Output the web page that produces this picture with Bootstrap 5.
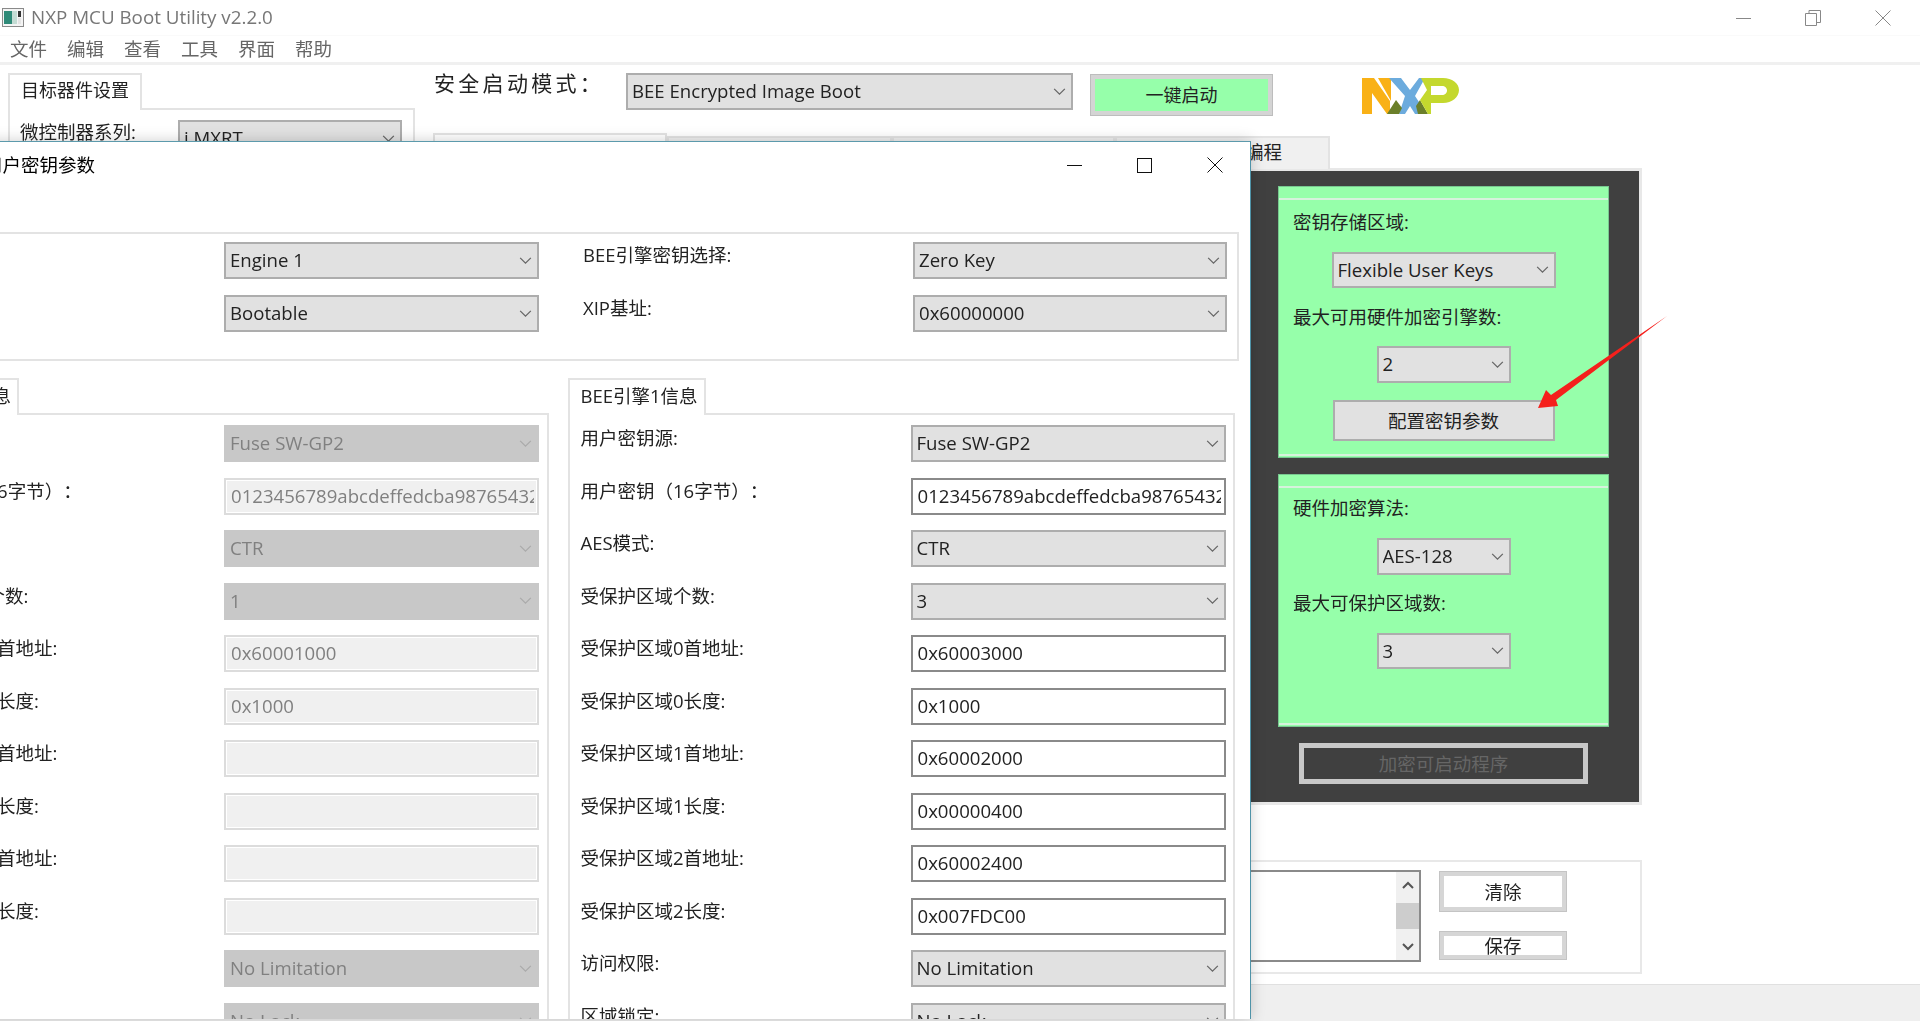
<!DOCTYPE html>
<html lang="zh">
<head>
<meta charset="utf-8">
<title>NXP MCU Boot Utility v2.2.0</title>
<link href="https://cdn.jsdelivr.net/npm/bootstrap@5.3.0/dist/css/bootstrap.min.css" rel="stylesheet">
<style>
html,body{margin:0;height:1021px;overflow:hidden;background:#fff}
body{font-family:"Open Sans","Noto Sans CJK SC",sans-serif;font-size:18.5px;color:#222;text-spacing-trim:space-all}
.wx-desk{position:relative;width:1920px;height:1021px;overflow:hidden;filter:blur(.4px)}
.wx-main{height:1019px}
.wx-tbar{height:36px;padding-left:2px;border-bottom:1px solid #fafafa}
.wx-title{font-size:18.8px;color:#777;margin-left:7px}
.wx-ctl{margin-left:auto;padding-right:29px;gap:54px}
.wx-menu{height:26px;padding-left:10px;gap:20px;font-size:18.5px;color:#666;line-height:26px}
.wx-sep{height:3px;background:#f0f0f0}
.wx-left{width:407px;margin-left:8px;margin-top:8px;flex:none}
.wx-tab{height:37px;border:2px solid #e3e3e3;border-bottom:0;background:#fff;padding:0 11px;font-size:18px;line-height:31px;white-space:nowrap;flex:none}
.wx-pane{border:2px solid #e3e3e3;padding:10px 10px}
.wx-center{width:1209px;margin-left:18px;flex:none}
.wx-top{margin-top:8px;height:43px}
.wx-mode{width:193px;font-size:21px;letter-spacing:3.3px;line-height:20px;white-space:nowrap;padding-left:1px}
.wx-sel.form-select{--bs-form-select-bg-img:url("data:image/svg+xml,%3csvg xmlns='http://www.w3.org/2000/svg' viewBox='0 0 14 9'%3e%3cpath fill='none' stroke='%23666' stroke-width='1.4' d='M1 1l6 6 6-6'/%3e%3c/svg%3e");height:37px;min-height:0;border:2px solid #adadad;border-radius:0;background-color:#e1e1e1;background-size:13px 8px;background-position:right 5px center;padding:0 20px 1px 4px;font-size:18.6px;line-height:32px;color:#222;box-shadow:none;font-family:inherit;flex:none}
.wx-sel.form-select:disabled{--bs-form-select-bg-img:url("data:image/svg+xml,%3csvg xmlns='http://www.w3.org/2000/svg' viewBox='0 0 14 9'%3e%3cpath fill='none' stroke='%23aaa' stroke-width='1.4' d='M1 1l6 6 6-6'/%3e%3c/svg%3e");background-color:#c8c8c8;border-color:#c8c8c8;color:#808080;opacity:1}
.wx-in.form-control{height:37px;min-height:0;border:2px solid #8a8a8a;border-radius:0;padding:0 3px 2px 5px;font-size:18.6px;line-height:31px;color:#222;background:#fff;box-shadow:none;font-family:inherit;flex:none}
.wx-in.form-control:disabled{border-color:#dcdcdc;background:#f0f0f0;color:#808080;box-shadow:inset 0 0 0 1px #fff;opacity:1}
.wx-w447{width:447px}.wx-w315{width:315px}.wx-w314{width:314px}.wx-w224{width:224px}.wx-w134{width:134px}
.wx-go{width:183px;height:42px;margin-left:17px;margin-top:1px;border:5px solid #d4d4d4;outline:1px solid #bdbdbd;outline-offset:-1px;background:#96ffaa;color:#222;font-size:18px;border-radius:0;padding:0;line-height:30px}
.wx-logo{margin-left:89px;margin-top:5px;flex:none}
.wx-tabs{margin-top:20px;height:33px}
.wx-t{background:#f0f0f0;border:2px solid #e3e3e3;border-bottom:0;font-size:18.5px;line-height:28px;text-align:right;flex:none}
.wx-t1{width:234px;background:#fff;margin-top:-3px}.wx-t2{width:225px}.wx-t3{width:223px}.wx-t4{width:215px;padding-right:46px}
.wx-board{height:637px;margin-top:-1px;border:3px solid #e8e8e8;background:#404040;padding:15px 30px 0 0}
.wx-stack{width:331px}
.wx-green{width:331px;background:#96ffaa;border:1px solid #78c890;padding-top:11px}
.wx-g1{height:272px}.wx-g2{height:253px;margin-top:16px}
.wx-ginner{border-top:2px solid #d6f2dc;border-bottom:2px solid #d6f2dc;flex:1;padding-left:14px;margin-bottom:1px}
.wx-lbl{font-size:18.5px;line-height:24px;color:#222;white-space:nowrap}
.wx-m10{margin-top:10px}.wx-m8{margin-top:8px}.wx-m18{margin-top:18px}.wx-m17{margin-top:17px}.wx-m16{margin-top:16px}
.wx-centerx{align-self:center;margin-left:-14px}
.wx-h36.form-select{height:36px}
.wx-cfg{width:222px;height:41px;border:2px solid #adadad;background:#e1e1e1;color:#222;font-size:18.5px;border-radius:0;padding:0}
.wx-enc{width:289px;height:41px;margin-top:16px;border:5px solid #c8c8c8;background:#404040;color:#666;font-size:18.5px;border-radius:0;padding:0}
.wx-enc:disabled{background:#404040;color:#666;border-color:#c8c8c8;opacity:1}
.wx-log{height:114px;margin-top:55px;border:2px solid #e8e8e8;padding:8px 73px 0 0;gap:18px}
.wx-text{width:600px;height:92px;border:2px solid #8a8a8a;background:#fff;flex:none}
.wx-scroll{width:23px;background:#f0f0f0;margin-left:auto;padding:9px 0}
.wx-thumb{width:23px;height:26px;background:#cdcdcd}
.wx-side{width:128px;gap:19px;padding-top:1px}
.wx-wbtn{width:128px;border:5px solid #d6d6d6;outline:1px solid #c4c4c4;outline-offset:-1px;background:#fff;color:#222;font-size:18.5px;border-radius:0;padding:0;line-height:20px}
.wx-h41{height:41px}.wx-h29{height:29px}
.wx-status{height:37px;background:#efefef;border-top:1px solid #e0e0e0}
.wx-strip{height:2px}
.wx-s1{width:71px;background:#111}.wx-s2{width:516px;background:#aaa}.wx-s3{flex:1;background:#111}
.wx-dialog{position:absolute;left:-131px;top:141px;width:1382px;height:878px;background:#fff;border-top:1px solid #5c9aac;border-right:1px solid #4f93a8;box-shadow:0 0 14px rgba(0,0,0,.2);overflow:hidden;padding-left:12px;padding-right:11px}
.wx-dhead{height:46px;font-size:18.5px;color:#000;padding-left:103px}
.wx-dctl{margin-left:auto;padding-right:16px;gap:55px}
.wx-group{margin-top:44px;height:129px;border:2px solid #e3e3e3;padding:8px 0 0 341px;gap:16px}
.wx-glabel{width:330px;margin-left:44px;line-height:26px;font-size:18.5px;color:#222;white-space:nowrap;flex:none}
.wx-panels{margin-top:17px;gap:19px;display:grid;grid-template-columns:667.5px 667.5px}
.wx-dtab{width:138px}
.wx-dbody{border:2px solid #e3e3e3;border-bottom:0;margin-top:-2px;padding:10px 0 0 11px;gap:15.5px}
.wx-dtabtext{font-size:18.5px;line-height:32px}
.wx-field{height:37px}
.wx-flabel{width:330px;line-height:26px;font-size:18.5px;color:#222;white-space:nowrap;flex:none}
.wx-arrow{position:absolute;left:1530px;top:310px}
</style>
</head>
<body>
<div class="wx-desk">
  <div class="wx-main d-flex flex-column">
    <div class="wx-tbar d-flex align-items-center">
      <svg width="22" height="19" viewBox="0 0 22 19"><rect x=".5" y=".5" width="21" height="18" fill="#f4f4f4" stroke="#8a8a8a"/><rect x="2" y="3" width="8" height="13" fill="#2f8a78"/><rect x="10" y="3" width="5" height="13" fill="#c4dcd4"/><rect x="16" y="3" width="3" height="6" fill="#333"/><rect x="16" y="10" width="3" height="6" fill="#e4e4e4"/></svg>
      <span class="wx-title">NXP MCU Boot Utility v2.2.0</span>
      <div class="wx-ctl d-flex align-items-center">
        <svg width="15" height="16" viewBox="0 0 15 16"><path d="M0 8.500h15" stroke="#888" fill="none"/></svg>
        <svg width="16" height="16" viewBox="0 0 16 16"><path d="M.5 3.500h11v12H.5zM4 3.500V.5h11.500v12h-4" stroke="#888" fill="none"/></svg>
        <svg width="16" height="16" viewBox="0 0 16 16"><path d="M.5.500l15 15M15.500.500l-15 15" stroke="#888" fill="none"/></svg>
      </div>
    </div>
    <div class="wx-menu d-flex"><span>文件</span><span>编辑</span><span>查看</span><span>工具</span><span>界面</span><span>帮助</span></div>
    <div class="wx-sep"></div>
    <div class="d-flex flex-grow-1">
      <div class="wx-left">
        <div class="d-flex"><div class="wx-tab">目标器件设置</div></div>
        <div class="wx-pane d-flex align-items-start" style="margin-top:-2px">
          <span class="wx-lbl" style="width:158px">微控制器系列:</span>
          <select class="form-select wx-sel wx-w224"><option>i.MXRT</option></select>
        </div>
      </div>
      <div class="wx-center">
        <div class="wx-top d-flex">
          <div class="wx-mode">安全启动模式：</div>
          <select class="form-select wx-sel wx-w447"><option>BEE Encrypted Image Boot</option></select>
          <button class="btn wx-go" type="button">一键启动</button>
          <svg class="wx-logo" width="97" height="36" viewBox="0 0 97 36">
            <path fill="#f9b116" d="M0 0h12l16 23V36h-3L10 15v21H0z"/>
            <path fill="#f9b116" d="M16 0h13v23z"/>
            <path fill="#6cabdd" d="M27 0h12l9 12 9-12h6L53 18l12 18H53l-5-8-5 8H37l6-18z"/>
            <path fill="#6b7f2a" d="M37 36H25l9-14 6 8zM56 36h10l-8-14-4 6z"/>
            <path fill="#c4d82e" d="M59 0h22c9 0 16 5 16 12s-7 13-16 13H69v11h-3L58 22l7-10zM69 8v9h11c3 0 5-2 5-4.500S83 8 80 8z" fill-rule="evenodd"/>
          </svg>
        </div>
        <div class="wx-tabs d-flex">
          <div class="wx-t wx-t1"></div><div class="wx-t wx-t2"></div><div class="wx-t wx-t3"></div><div class="wx-t wx-t4">编程</div>
        </div>
        <div class="wx-board d-flex justify-content-end">
          <div class="wx-stack d-flex flex-column align-items-center">
            <div class="wx-green wx-g1 d-flex flex-column">
              <div class="wx-ginner d-flex flex-column">
                <span class="wx-lbl wx-m10">密钥存储区域:</span>
                <select class="form-select wx-sel wx-w224 wx-centerx wx-m18 wx-h36"><option>Flexible User Keys</option></select>
                <span class="wx-lbl wx-m17">最大可用硬件加密引擎数:</span>
                <select class="form-select wx-sel wx-w134 wx-centerx wx-m17"><option>2</option></select>
                <button class="btn wx-cfg wx-centerx wx-m17" type="button">配置密钥参数</button>
              </div>
            </div>
            <div class="wx-green wx-g2 d-flex flex-column">
              <div class="wx-ginner d-flex flex-column">
                <span class="wx-lbl wx-m8">硬件加密算法:</span>
                <select class="form-select wx-sel wx-w134 wx-centerx wx-m18"><option>AES-128</option></select>
                <span class="wx-lbl wx-m16">最大可保护区域数:</span>
                <select class="form-select wx-sel wx-w134 wx-centerx wx-m18 wx-h36"><option>3</option></select>
              </div>
            </div>
            <button class="btn wx-enc" type="button" disabled>加密可启动程序</button>
          </div>
        </div>
        <div class="wx-log d-flex justify-content-end">
          <div class="wx-text d-flex">
            <div class="wx-scroll d-flex flex-column justify-content-between align-items-center">
              <svg width="12" height="8" viewBox="0 0 12 8"><path d="M1 7l5-5 5 5" fill="none" stroke="#555" stroke-width="2"/></svg>
              <div class="wx-thumb"></div>
              <svg width="12" height="8" viewBox="0 0 12 8"><path d="M1 1l5 5 5-5" fill="none" stroke="#555" stroke-width="2"/></svg>
            </div>
          </div>
          <div class="wx-side d-flex flex-column">
            <button class="btn wx-wbtn wx-h41" type="button">清除</button>
            <button class="btn wx-wbtn wx-h29" type="button">保存</button>
          </div>
        </div>
      </div>
    </div>
  </div>
  <div class="wx-status" style="margin-top:-35px"></div>
  <div class="wx-dialog">
    <div class="wx-dhead d-flex align-items-center">
      <span>用户密钥参数</span>
      <div class="wx-dctl d-flex align-items-center">
        <svg width="15" height="15" viewBox="0 0 15 15"><path d="M0 7.500h15" stroke="#111" fill="none"/></svg>
        <svg width="15" height="15" viewBox="0 0 15 15"><rect x=".5" y=".5" width="14" height="14" stroke="#111" fill="none"/></svg>
        <svg width="16" height="16" viewBox="0 0 16 16"><path d="M.5.500l15 15M15.500.500l-15 15" stroke="#111" fill="none"/></svg>
      </div>
    </div>
    <div class="wx-group d-flex flex-column">
      <div class="wx-field d-flex">
        <select class="form-select wx-sel wx-w315"><option>Engine 1</option></select>
        <span class="wx-glabel">BEE引擎密钥选择:</span>
        <select class="form-select wx-sel wx-w314"><option>Zero Key</option></select>
      </div>
      <div class="wx-field d-flex">
        <select class="form-select wx-sel wx-w315"><option>Bootable</option></select>
        <span class="wx-glabel">XIP基址:</span>
        <select class="form-select wx-sel wx-w314"><option>0x60000000</option></select>
      </div>
    </div>
    <div class="wx-panels">
      <div>
        <div class="d-flex"><div class="wx-tab wx-dtab wx-dtabtext">BEE引擎0信息</div></div>
        <div class="wx-dbody d-flex flex-column">
          <div class="wx-field d-flex"><span class="wx-flabel">用户密钥源:</span><select class="form-select wx-sel wx-w315" disabled><option>Fuse SW-GP2</option></select></div>
          <div class="wx-field d-flex"><span class="wx-flabel">用户密钥（16字节）：</span><input class="form-control wx-in wx-w315" value="0123456789abcdeffedcba9876543210" disabled></div>
          <div class="wx-field d-flex"><span class="wx-flabel">AES模式:</span><select class="form-select wx-sel wx-w315" disabled><option>CTR</option></select></div>
          <div class="wx-field d-flex"><span class="wx-flabel">受保护区域个数:</span><select class="form-select wx-sel wx-w315" disabled><option>1</option></select></div>
          <div class="wx-field d-flex"><span class="wx-flabel">受保护区域0首地址:</span><input class="form-control wx-in wx-w315" value="0x60001000" disabled></div>
          <div class="wx-field d-flex"><span class="wx-flabel">受保护区域0长度:</span><input class="form-control wx-in wx-w315" value="0x1000" disabled></div>
          <div class="wx-field d-flex"><span class="wx-flabel">受保护区域1首地址:</span><input class="form-control wx-in wx-w315" disabled></div>
          <div class="wx-field d-flex"><span class="wx-flabel">受保护区域1长度:</span><input class="form-control wx-in wx-w315" disabled></div>
          <div class="wx-field d-flex"><span class="wx-flabel">受保护区域2首地址:</span><input class="form-control wx-in wx-w315" disabled></div>
          <div class="wx-field d-flex"><span class="wx-flabel">受保护区域2长度:</span><input class="form-control wx-in wx-w315" disabled></div>
          <div class="wx-field d-flex"><span class="wx-flabel">访问权限:</span><select class="form-select wx-sel wx-w315" disabled><option>No Limitation</option></select></div>
          <div class="wx-field d-flex"><span class="wx-flabel">区域锁定:</span><select class="form-select wx-sel wx-w315" disabled><option>No Lock</option></select></div>
        </div>
      </div>
      <div>
        <div class="d-flex"><div class="wx-tab wx-dtab wx-dtabtext">BEE引擎1信息</div></div>
        <div class="wx-dbody d-flex flex-column">
          <div class="wx-field d-flex"><span class="wx-flabel">用户密钥源:</span><select class="form-select wx-sel wx-w315"><option>Fuse SW-GP2</option></select></div>
          <div class="wx-field d-flex"><span class="wx-flabel">用户密钥（16字节）：</span><input class="form-control wx-in wx-w315" value="0123456789abcdeffedcba9876543210"></div>
          <div class="wx-field d-flex"><span class="wx-flabel">AES模式:</span><select class="form-select wx-sel wx-w315"><option>CTR</option></select></div>
          <div class="wx-field d-flex"><span class="wx-flabel">受保护区域个数:</span><select class="form-select wx-sel wx-w315"><option>3</option></select></div>
          <div class="wx-field d-flex"><span class="wx-flabel">受保护区域0首地址:</span><input class="form-control wx-in wx-w315" value="0x60003000"></div>
          <div class="wx-field d-flex"><span class="wx-flabel">受保护区域0长度:</span><input class="form-control wx-in wx-w315" value="0x1000"></div>
          <div class="wx-field d-flex"><span class="wx-flabel">受保护区域1首地址:</span><input class="form-control wx-in wx-w315" value="0x60002000"></div>
          <div class="wx-field d-flex"><span class="wx-flabel">受保护区域1长度:</span><input class="form-control wx-in wx-w315" value="0x00000400"></div>
          <div class="wx-field d-flex"><span class="wx-flabel">受保护区域2首地址:</span><input class="form-control wx-in wx-w315" value="0x60002400"></div>
          <div class="wx-field d-flex"><span class="wx-flabel">受保护区域2长度:</span><input class="form-control wx-in wx-w315" value="0x007FDC00"></div>
          <div class="wx-field d-flex"><span class="wx-flabel">访问权限:</span><select class="form-select wx-sel wx-w315"><option>No Limitation</option></select></div>
          <div class="wx-field d-flex"><span class="wx-flabel">区域锁定:</span><select class="form-select wx-sel wx-w315"><option>No Lock</option></select></div>
        </div>
      </div>
    </div>
  </div>
  <div class="wx-strip d-flex"><div class="wx-s1"></div><div class="wx-s2"></div><div class="wx-s3"></div></div>
  <svg class="wx-arrow" width="140" height="104" viewBox="0 0 140 104"><path fill="#f5201c" d="M137 6L26 90l2 6-20 2 8-18 5 5z"/></svg>
</div>
<script src="https://cdn.jsdelivr.net/npm/bootstrap@5.3.0/dist/js/bootstrap.bundle.min.js"></script>
</body>
</html>
